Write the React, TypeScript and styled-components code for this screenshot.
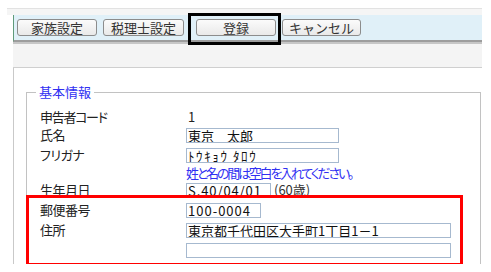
import React from 'react';
import styled, { createGlobalStyle } from 'styled-components';

const Global = createGlobalStyle`
  html, body { margin: 0; padding: 0; background: #fff; overflow: hidden; }
  body {
    font-family: "Noto Sans CJK JP", "Noto Sans", sans-serif;
    font-size: 13px;
    color: #222;
  }
`;

const Page = styled.div`
  box-sizing: border-box;
  height: 264px;
  overflow: hidden;
  padding: 8px 9px 0 13px;
`;

const TopStrip = styled.div`
  box-sizing: border-box;
  height: 7px;
  margin-left: -6px;
  border-top: 1px solid #e2e2e2;
  background: #f5f5f5;
`;

const Toolbar = styled.div`
  box-sizing: border-box;
  height: 27px;
  display: flex;
  align-items: center;
  gap: 6px;
  padding-left: 3px;
  background: #e0f0f8;
  border-left: 1px solid #5f9a7a;
  border-bottom: 2px solid #9d9d9d;
`;

const Button = styled.button<{ $w: number }>`
  box-sizing: border-box;
  width: ${(p) => p.$w}px;
  height: 17px;
  padding: 0;
  border: 1px solid #8c8c8c;
  border-radius: 3px;
  background: linear-gradient(#fbfbfb, #e9e9e9);
  font-family: "Noto Sans CJK JP", sans-serif;
  font-size: 13px;
  line-height: 15px;
  color: #333;
`;

const Highlight = styled.div`
  position: relative;
  margin-left: 6px;
  display: flex;
  &::after {
    content: '';
    position: absolute;
    left: -8px;
    right: -5px;
    top: -6px;
    bottom: -9px;
    border: 3px solid #000;
    pointer-events: none;
    z-index: 2;
  }
`;

const GrayArea = styled.div`
  box-sizing: border-box;
  height: 26px;
  background: #f4f4f4;
  border-top: 2px solid #c6c6c6;
  border-bottom: 1px solid #cfcfcf;
`;

const Panel = styled.div`
  border-left: 1px solid #c9c9c9;
  padding: 16px 1px 0 12px;
  background: #fff;
`;

const Fieldset = styled.fieldset`
  margin: 0;
  padding: 8px 0 0 13px;
  border: 1px solid #c2c2c2;
  min-height: 300px;
`;

const Legend = styled.legend`
  margin-left: -4px;
  padding: 0 3px;
  font-size: 13px;
  line-height: 16px;
  color: #3030f2;
`;

const Row = styled.div<{ $h: number }>`
  display: flex;
  align-items: center;
  height: ${(p) => p.$h}px;
`;

const Label = styled.div<{ $ls?: number }>`
  flex: none;
  width: 146px;
  line-height: 14px;
  letter-spacing: ${(p) => p.$ls ?? -0.5}px;
  font-feature-settings: "palt";
  color: #222;
`;

const Plain = styled.span`
  padding-left: 2px;
  line-height: 14px;
`;

const Note = styled.div`
  padding-left: 146px;
  line-height: 14px;
  letter-spacing: -2.2px;
  color: #3030f2;
  font-feature-settings: "palt";
  white-space: nowrap;
`;

const Field = styled.input<{ $w: number; $ls?: number }>`
  box-sizing: border-box;
  width: ${(p) => p.$w}px;
  height: 15px;
  margin: 0;
  padding: 0 1px;
  border: 1px solid #a6b9cf;
  background: #fff;
  font-family: "Noto Sans CJK JP", sans-serif;
  font-size: 13px;
  line-height: 13px;
  letter-spacing: ${(p) => p.$ls ?? 0}px;
  color: #111;
  outline: none;
`;

const Age = styled.span`
  margin-left: 3px;
  line-height: 14px;
  color: #333;
`;

const Marked = styled.div`
  position: relative;
  &::after {
    content: '';
    position: absolute;
    top: -5px;
    bottom: -6px;
    left: -14px;
    width: 437px;
    box-sizing: border-box;
    border: 3px solid #ff0000;
    pointer-events: none;
  }
`;

export default function App() {
  return (
    <>
      <Global />
      <Page>
        <TopStrip />
        <Toolbar>
          <Button $w={80}>家族設定</Button>
          <Button $w={81}>税理士設定</Button>
          <Highlight>
            <Button $w={80}>登録</Button>
          </Highlight>
          <Button $w={79}>キャンセル</Button>
        </Toolbar>
        <GrayArea />
        <Panel>
          <Fieldset>
            <Legend>基本情報</Legend>
            <Row $h={17}>
              <Label $ls={-1.3}>申告者コード</Label>
              <Plain>1</Plain>
            </Row>
            <Row $h={20}>
              <Label>氏名</Label>
              <Field $w={153} readOnly value="東京　太郎" />
            </Row>
            <Row $h={20}>
              <Label>フリガナ</Label>
              <Field $w={153} $ls={1.6} readOnly value="ﾄｳｷｮｳ ﾀﾛｳ" />
            </Row>
            <Row $h={15}>
              <Note>姓と名の間は空白を入れてください。</Note>
            </Row>
            <Row $h={20}>
              <Label>生年月日</Label>
              <Field $w={85} $ls={0.9} readOnly value="S.40/04/01" />
              <Age>(60歳)</Age>
            </Row>
            <Marked>
              <Row $h={20}>
                <Label>郵便番号</Label>
                <Field $w={75} $ls={1} readOnly value="100-0004" />
              </Row>
              <Row $h={20}>
                <Label>住所</Label>
                <Field $w={265} readOnly value="東京都千代田区大手町1丁目1－1" />
              </Row>
              <Row $h={20}>
                <Label />
                <Field $w={265} readOnly value="" />
              </Row>
            </Marked>
          </Fieldset>
        </Panel>
      </Page>
    </>
  );
}
